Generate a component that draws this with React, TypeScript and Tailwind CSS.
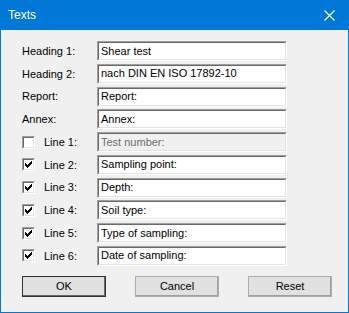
import React from "react";

const font = { fontFamily: '"Liberation Sans", Arial, sans-serif' };

const Field = ({ value, disabled }: { value: string; disabled?: boolean }) => (
  <div
    className={`h-[20px] w-[190px] border-t-[#a0a0a0] border-l-[#a0a0a0] border-r-white border-b-white border ${
      disabled ? "bg-[#f0f0f0]" : "bg-white"
    }`}
  >
    <div className="h-full border-t border-l border-t-[#696969] border-l-[#696969] border-r border-b border-r-[#e3e3e3] border-b-[#e3e3e3] flex items-center pl-[2px]">
      <span className={`text-[11px] leading-none ${disabled ? "text-[#6d6d6d]" : "text-black"}`}>{value}</span>
    </div>
  </div>
);

const Check = ({ checked }: { checked: boolean }) => (
  <div className="w-[13px] h-[13px] border border-t-[#a0a0a0] border-l-[#a0a0a0] border-r-white border-b-white">
    <div className="w-full h-full bg-white border border-t-[#696969] border-l-[#696969] border-r-[#e3e3e3] border-b-[#e3e3e3] flex items-center justify-center">
      {checked && (
        <svg width="7" height="7" viewBox="0 0 7 7">
          <path d="M0 2h1v1h1v1h1v-1h1v-1h1v-1h1v-1h1v3h-1v1h-1v1h-1v1h-1v1h-1v-1h-1v-1h-1z" fill="#000" />
        </svg>
      )}
    </div>
  </div>
);

const Btn = ({ label, primary }: { label: string; primary?: boolean }) => (
  <div
    className={`w-[84px] h-[21px] bg-[#e1e1e1] flex items-center justify-center text-[11px] text-black ${
      primary ? "border border-[#333] shadow-[inset_-1px_-1px_0_#696969]" : "border border-[#adadad] shadow-[inset_-1px_-1px_0_#a0a0a0]"
    }`}
  >
    {label}
  </div>
);

const rows: { label: string; value: string; check?: boolean; disabled?: boolean }[] = [
  { label: "Heading 1:", value: "Shear test" },
  { label: "Heading 2:", value: "nach DIN EN ISO 17892-10" },
  { label: "Report:", value: "Report:" },
  { label: "Annex:", value: "Annex:" },
  { label: "Line 1:", value: "Test number:", check: false, disabled: true },
  { label: "Line 2:", value: "Sampling point:", check: true },
  { label: "Line 3:", value: "Depth:", check: true },
  { label: "Line 4:", value: "Soil type:", check: true },
  { label: "Line 5:", value: "Type of sampling:", check: true },
  { label: "Line 6:", value: "Date of sampling:", check: true },
];

export default function App() {
  return (
    <div className="w-[349px] h-[313px] flex flex-col border border-[#0078d7] bg-[#f0f0f0]" style={font}>
      <div className="h-[30px] bg-[#0078d7] flex items-center justify-between pl-[8px] pr-[14px] -mx-px -mt-px">
        <span className="text-white text-[12px]">Texts</span>
        <svg width="11" height="11" viewBox="0 0 11 11">
          <path d="M0.5 0.5L10.5 10.5M10.5 0.5L0.5 10.5" stroke="#fff" strokeWidth="1.1" />
        </svg>
      </div>
      <div className="flex flex-col gap-[2.78px] pt-[11px] pl-[21px]">
        {rows.map((r) => (
          <div key={r.label} className="flex items-center h-[20px]">
            <div className="w-[75px] flex items-center text-[11px] text-black">
              {r.check !== undefined ? (
                <>
                  <Check checked={r.check} />
                  <span className="ml-[9px]">{r.label}</span>
                </>
              ) : (
                <span>{r.label}</span>
              )}
            </div>
            <Field value={r.value} disabled={r.disabled} />
          </div>
        ))}
      </div>
      <div className="flex pl-[21px] mt-[10px] gap-[29px]">
        <Btn label="OK" primary />
        <Btn label="Cancel" />
        <Btn label="Reset" />
      </div>
    </div>
  );
}
